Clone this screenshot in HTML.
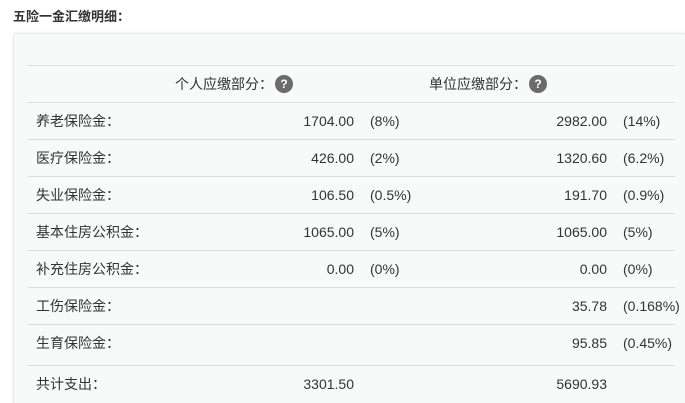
<!DOCTYPE html>
<html><head><meta charset="utf-8"><style>
html,body{margin:0;width:685px;height:403px;overflow:hidden}
body{background:#fff;font-family:"Liberation Sans","Noto Sans CJK SC",sans-serif;color:#333;font-size:14px;position:relative}
.t{position:absolute;left:13px;top:6px;font-weight:bold;font-size:13px;color:#333}
.card{position:absolute;left:13px;top:33px;width:671px;height:369px;background:#f8f9f9;border:1px solid #e8e8e8;border-bottom:none;border-right:none;border-radius:3px 0 0 0;box-shadow:0 0 3px rgba(0,0,0,.08)}
.l{position:absolute;left:28px;width:647px;height:1px;background:#dcdcdc}
.a{position:absolute;white-space:nowrap;color:#333;line-height:16px}
.r{text-align:right}
.q{position:absolute;width:18px;height:18px;border-radius:50%;background:#6b6b6b;color:#fff;font-weight:bold;font-size:12px;text-align:center;line-height:18px}
</style></head><body>
<div class="t">五险一金汇缴明细：</div>
<div class="card"></div>
<div class="l" style="top:65px"></div>
<div class="a" style="left:175px;top:76px">个人应缴部分：</div><div class="q" style="left:275px;top:75px">?</div>
<div class="a" style="left:429px;top:76px">单位应缴部分：</div><div class="q" style="left:529px;top:75px">?</div>
<div class="l" style="top:102px"></div>
<div class="l" style="top:139px"></div>
<div class="l" style="top:176px"></div>
<div class="l" style="top:213px"></div>
<div class="l" style="top:250px"></div>
<div class="l" style="top:287px"></div>
<div class="l" style="top:324px"></div>
<div class="l" style="top:365px"></div>

<div class="a" style="left:36px;top:113px">养老保险金：</div><div class="a r" style="right:331px;top:113px">1704.00</div><div class="a" style="left:370px;top:113px">(8%)</div><div class="a r" style="right:78px;top:113px">2982.00</div><div class="a" style="left:623px;top:113px">(14%)</div>
<div class="a" style="left:36px;top:150px">医疗保险金：</div><div class="a r" style="right:331px;top:150px">426.00</div><div class="a" style="left:370px;top:150px">(2%)</div><div class="a r" style="right:78px;top:150px">1320.60</div><div class="a" style="left:623px;top:150px">(6.2%)</div>
<div class="a" style="left:36px;top:187px">失业保险金：</div><div class="a r" style="right:331px;top:187px">106.50</div><div class="a" style="left:370px;top:187px">(0.5%)</div><div class="a r" style="right:78px;top:187px">191.70</div><div class="a" style="left:623px;top:187px">(0.9%)</div>
<div class="a" style="left:36px;top:224px">基本住房公积金：</div><div class="a r" style="right:331px;top:224px">1065.00</div><div class="a" style="left:370px;top:224px">(5%)</div><div class="a r" style="right:78px;top:224px">1065.00</div><div class="a" style="left:623px;top:224px">(5%)</div>
<div class="a" style="left:36px;top:261px">补充住房公积金：</div><div class="a r" style="right:331px;top:261px">0.00</div><div class="a" style="left:370px;top:261px">(0%)</div><div class="a r" style="right:78px;top:261px">0.00</div><div class="a" style="left:623px;top:261px">(0%)</div>
<div class="a" style="left:36px;top:298px">工伤保险金：</div><div class="a r" style="right:78px;top:298px">35.78</div><div class="a" style="left:623px;top:298px">(0.168%)</div>
<div class="a" style="left:36px;top:335px">生育保险金：</div><div class="a r" style="right:78px;top:335px">95.85</div><div class="a" style="left:623px;top:335px">(0.45%)</div>
<div class="a" style="left:36px;top:376px">共计支出：</div><div class="a r" style="right:331px;top:376px">3301.50</div><div class="a r" style="right:78px;top:376px">5690.93</div>
</body></html>
